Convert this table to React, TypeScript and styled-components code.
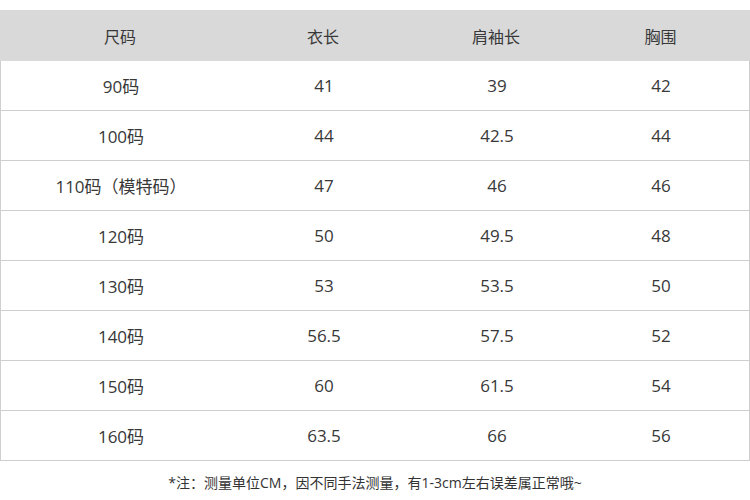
import React from 'react';
import styled, { createGlobalStyle } from 'styled-components';

const GlobalStyle = createGlobalStyle`
	body {
		margin: 0;
		background: #fff;
		font-family: 'Open Sans', 'Noto Sans CJK SC', sans-serif;
	}
`;

const headers = ['尺码', '衣长', '肩袖长', '胸围'];

const rows: string[][] = [
	['90码', '41', '39', '42'],
	['100码', '44', '42.5', '44'],
	['110码（模特码）', '47', '46', '46'],
	['120码', '50', '49.5', '48'],
	['130码', '53', '53.5', '50'],
	['140码', '56.5', '57.5', '52'],
	['150码', '60', '61.5', '54'],
	['160码', '63.5', '66', '56'],
];

const App = (): JSX.Element => {
	return (
		<Page>
			<GlobalStyle />
			<Table>
				<HeaderRow>
					{headers.map((h) => (
						<Cell key={h}>{h}</Cell>
					))}
				</HeaderRow>
				{rows.map((row) => (
					<Row key={row[0]}>
						{row.map((value, i) => (
							<Cell key={i}>{value}</Cell>
						))}
					</Row>
				))}
			</Table>
			<Note>*注：测量单位CM，因不同手法测量，有1-3cm左右误差属正常哦~</Note>
		</Page>
	);
};

const Page = styled.div`
	width: 750px;
	height: 500px;
	padding-top: 10px;
	box-sizing: border-box;
	display: flex;
	flex-direction: column;
`;

const Table = styled.div`
	display: flex;
	flex-direction: column;
`;

const RowBase = styled.div`
	display: grid;
	grid-template-columns: 240px 166px 180px 1fr;
	align-items: center;
	color: #383838;
	box-sizing: border-box;
`;

const HeaderRow = styled(RowBase)`
	height: 51px;
	background: #d9d9d9;
	padding-right: 15px;
	font-size: 16px;
`;

const Row = styled(RowBase)`
	height: 50px;
	border-left: 1px solid #cfcfcf;
	border-right: 1px solid #cfcfcf;
	border-bottom: 1px solid #cfcfcf;
	padding-right: 14px;
	font-size: 17px;
`;

const Cell = styled.div`
	text-align: center;
	white-space: nowrap;
`;

const Note = styled.div`
	margin-top: 11px;
	text-align: center;
	font-size: 14px;
	color: #333;
`;

export default App;
